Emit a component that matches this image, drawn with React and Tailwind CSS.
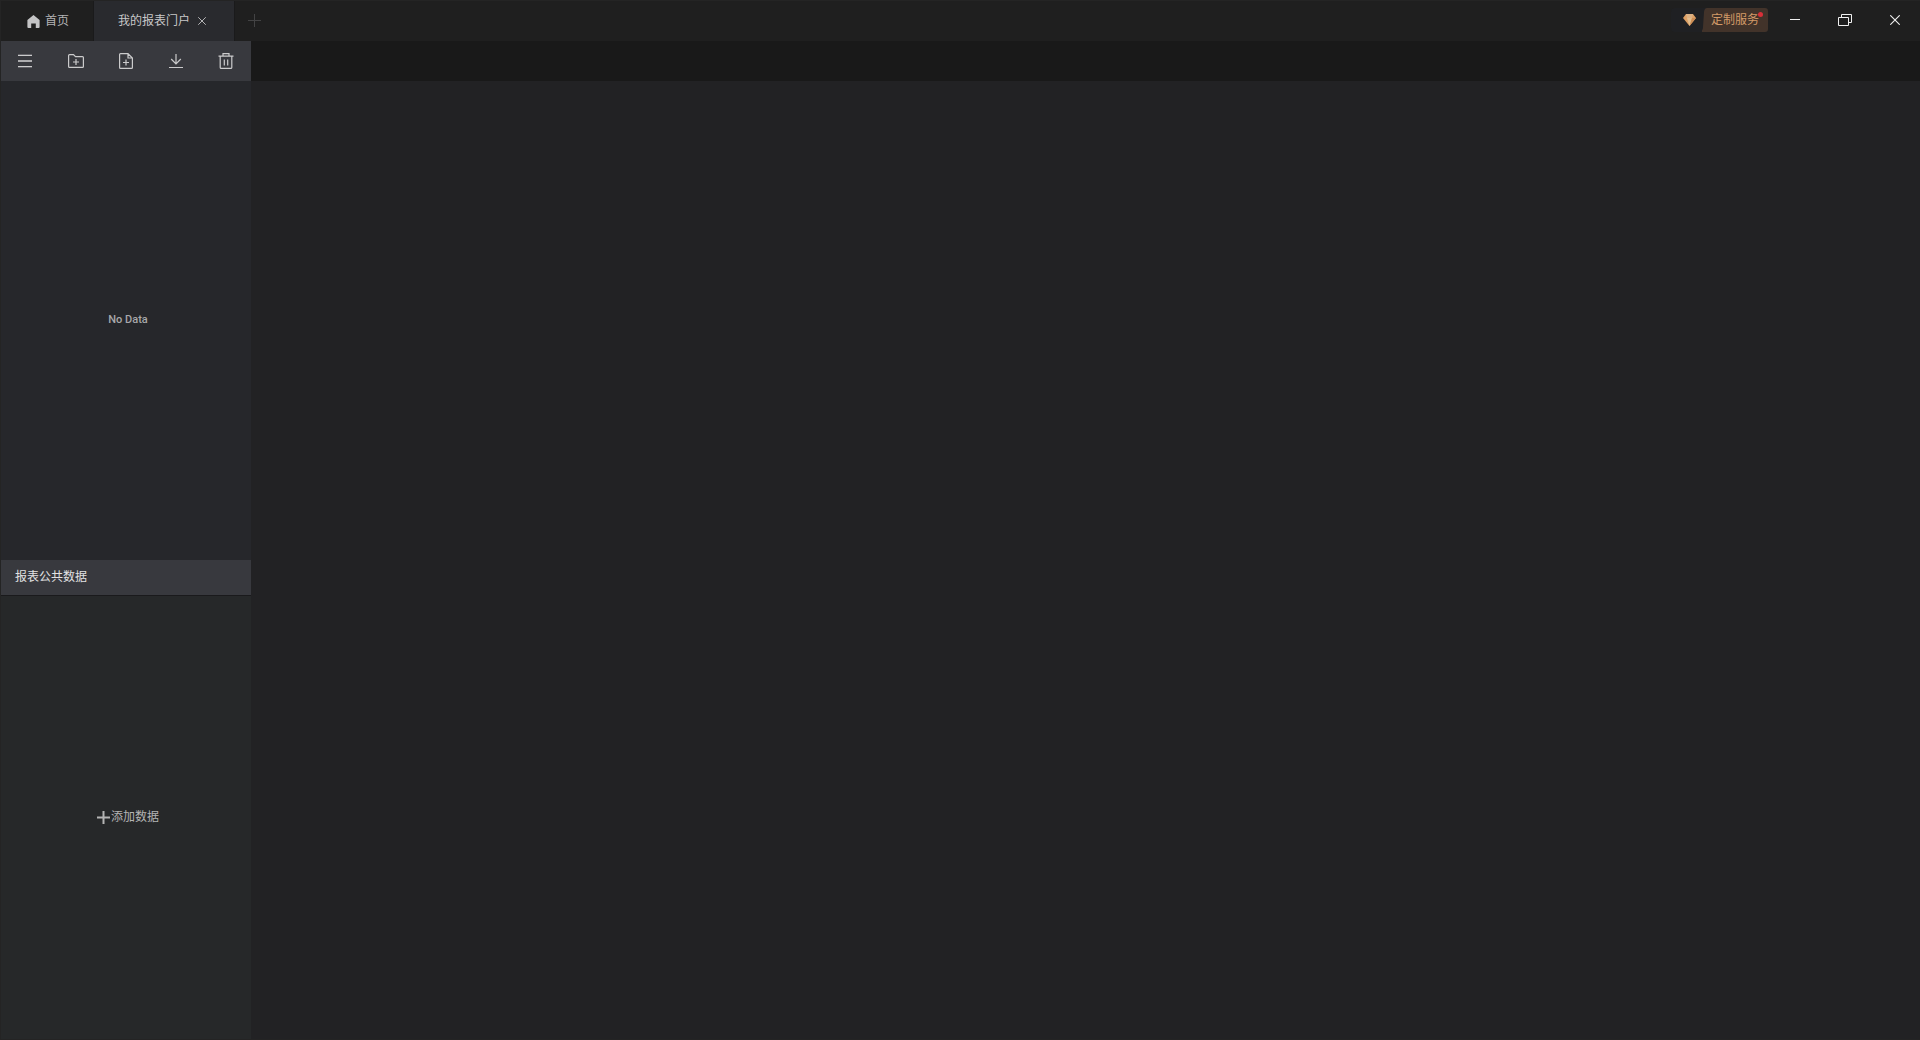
import React, { useState } from 'react';

const HomeIcon = () => (
  <svg width="13" height="13" viewBox="0 0 13 13" fill="#c4c4c5" aria-hidden="true">
    <path d="M6.5 0 L12.6 5 V12 Q12.6 13 11.6 13 H8.8 V8.5 H4.2 V13 H1.4 Q.4 13 .4 12 V5 Z" />
  </svg>
);

const CrossIcon = ({ size }) => (
  <svg width={size} height={size} viewBox="0 0 10 10" fill="none" stroke="currentColor" aria-hidden="true">
    <path d="M.3 .3 L9.7 9.7 M9.7 .3 L.3 9.7" strokeWidth="1.1" />
  </svg>
);

const PlusIcon = ({ weight }) => (
  <svg width="13" height="13" viewBox="0 0 13 13" fill="none" stroke="currentColor" strokeWidth={weight} aria-hidden="true">
    <path d="M6.5 0 V13 M0 6.5 H13" />
  </svg>
);

const GemIcon = () => (
  <svg width="13" height="12" viewBox="0 0 13 12" aria-hidden="true">
    <path d="M3 0 H10 L13 4 L6.5 12 L0 4 Z" fill="#dd9f63" />
    <path d="M3 0 H10 L9 4 H4 Z" fill="#dcb183" />
    <path d="M4 4 H9 L6.5 12 Z" fill="#e3bd8d" />
    <path d="M9 4 H13 L6.5 12 Z" fill="#cc8d55" />
  </svg>
);

const tools = [
  {
    label: '菜单',
    icon: (
      <>
        <path d="M0 2.5 H14 M0 13.5 H14" strokeWidth="1" />
        <path d="M0 8 H14" strokeWidth="2" opacity=".8" />
        <path d="M0 1.5 H14 M0 14.5 H14" strokeWidth="1" opacity=".3" />
      </>
    ),
  },
  {
    label: '新建文件夹',
    icon: <path d="M.6 2.5 Q.6 1.6 1.5 1.6 H5.5 L7.5 3.6 H14.5 Q15.4 3.6 15.4 4.5 V13.5 Q15.4 14.4 14.5 14.4 H1.5 Q.6 14.4 .6 13.5 Z M8 6 V12 M5 9 H11" />,
  },
  {
    label: '新建报表',
    icon: <path d="M10 .6 H2.5 Q1.6 .6 1.6 1.5 V14.5 Q1.6 15.4 2.5 15.4 H13.5 Q14.4 15.4 14.4 14.5 V5 L10 .6 V5 H14.4 M8 6.5 V12.5 M5 9.5 H11" />,
  },
  {
    label: '导入',
    icon: <path d="M8 1 V11 M3.2 6 L8 10.8 L12.8 6 M1 14.5 H15" />,
  },
  {
    label: '删除',
    icon: <path d="M.5 3.2 H15.5 M5 3 V.7 H11 V3 M2.2 3.2 V14.5 Q2.2 15.4 3.2 15.4 H12.8 Q13.8 15.4 13.8 14.5 V3.2 M6.3 6.5 V12.5 M9.7 6.5 V12.5" />,
  },
];

const TitleBar = () => {
  const [tabs, setTabs] = useState(['我的报表门户']);

  const closeTab = (name) => {
    setTabs(tabs.filter((tab) => tab !== name));
  };

  return (
    <header className="flex h-10 shrink-0 items-stretch justify-between bg-[#1f1f1f]">
      <nav className="flex">
        <button className="flex w-[93px] items-center gap-[5px] border-r border-[#1a1a1b] pl-[26px] text-[#b4b4b5]">
          <HomeIcon />
          首页
        </button>
        {tabs.map((tab) => (
          <div key={tab} className="flex w-[141px] items-center gap-2 border-r border-[#1a1a1b] bg-[#292a2e] pl-6 text-[#c8c8c9]">
            <button>{tab}</button>
            <button aria-label="关闭标签" onClick={() => closeTab(tab)}>
              <CrossIcon size={8} />
            </button>
          </div>
        ))}
        <button aria-label="新建标签" className="ml-[13px] pb-px text-[#434344]">
          <PlusIcon weight={1} />
        </button>
      </nav>
      <div className="flex h-full items-center pb-0.5 text-[#f0f0f0]">
        <button className="mr-0.5 flex h-6 items-center rounded bg-[#1f2023]">
          <span className="flex w-[31px] justify-end pr-1.5">
            <GemIcon />
          </span>
          <span className="relative flex h-6 w-[66px] items-center justify-center text-[#d39a68]">
            <svg className="absolute inset-0" width="66" height="24" viewBox="0 0 66 24" aria-hidden="true">
              <path d="M5 0 H63 Q66 0 66 3 V21 Q66 24 63 24 H-2 Q1 23 1 19 L2 4 Q2.5 0 5 0 Z" fill="#42332a" overflow="visible" />
            </svg>
            <span className="relative">定制服务</span>
            <span className="absolute top-1 right-[5px] size-[5px] rounded-full bg-[#d92f38]" />
          </span>
        </button>
        <button aria-label="最小化" className="flex h-full w-[50px] items-center justify-center">
          <svg width="10" height="12" viewBox="0 0 10 12" stroke="currentColor" aria-hidden="true">
            <path d="M0 5.5 H10" />
          </svg>
        </button>
        <button aria-label="还原" className="flex h-full w-[50px] items-center justify-center">
          <svg width="14" height="12" viewBox="0 0 14 12" fill="none" stroke="currentColor" aria-hidden="true">
            <path d="M.5 3.5 H10.5 V11.5 H.5 Z M3.5 3.5 V.5 H13.5 V8.5 H10.5" />
          </svg>
        </button>
        <button aria-label="关闭" className="flex h-full w-[50px] items-center justify-center">
          <CrossIcon size={10} />
        </button>
      </div>
    </header>
  );
};

const Sidebar = () => (
  <aside className="flex w-[250px] shrink-0 flex-col">
    <section className="flex h-[52%] flex-col bg-[#26272b]">
      <div className="grid h-10 shrink-0 grid-cols-5 bg-[#38393e]">
        {tools.map((tool) => (
          <button key={tool.label} aria-label={tool.label} className="flex items-center justify-center text-[#cbcbcc]">
            <svg width="16" height="16" viewBox="0 0 16 16" fill="none" stroke="currentColor" strokeWidth="1.2" aria-hidden="true">
              {tool.icon}
            </svg>
          </button>
        ))}
      </div>
      <div className="flex flex-1 items-center justify-center pl-1 text-[11px] font-medium text-[#a8a8aa]">No Data</div>
    </section>
    <section className="flex flex-1 flex-col bg-[#262829]">
      <h2 className="flex h-9 shrink-0 items-center border-b border-[#1a1a1c] bg-[#38393e] pl-3.5 text-[#e2e2e3]">报表公共数据</h2>
      <div className="flex flex-1 items-center justify-center pl-1">
        <button className="flex items-center gap-px text-[#b4b4b4]">
          <PlusIcon weight={2} />
          添加数据
        </button>
      </div>
    </section>
  </aside>
);

const App = () => {
  return (
    <div className="flex h-screen flex-col border-y border-l border-[#242424] bg-[#222224] font-['Roboto','Noto_Sans_CJK_SC',sans-serif] text-[12px] leading-4">
      <TitleBar />
      <div className="flex min-h-0 flex-1">
        <Sidebar />
        <main className="flex-1">
          <div className="h-10 bg-[#191919]" />
        </main>
      </div>
    </div>
  );
};

export default App;
